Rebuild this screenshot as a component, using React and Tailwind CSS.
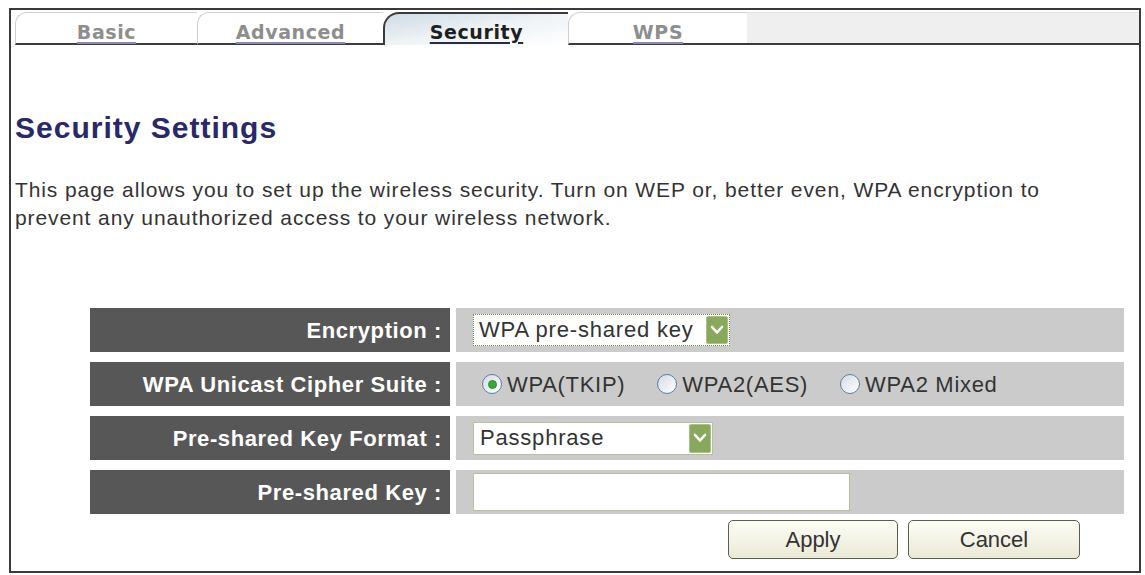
import React from 'react';

const sans = "font-['Liberation_Sans',Arial,sans-serif]";

function Chevron() {
  return (
    <svg width="14" height="12" viewBox="0 0 14 12">
      <polyline points="2,3 7,8.5 12,3" fill="none" stroke="#ffffff" strokeWidth="2.6" strokeLinecap="round" strokeLinejoin="round" />
    </svg>
  );
}

function Radio({ checked, label }) {
  return (
    <div className="flex items-center gap-[5px]">
      <div className="w-[20px] h-[20px] rounded-full border border-[#5d7ea8] bg-linear-to-br from-[#d6dbe2] to-white flex items-center justify-center">
        {checked && <div className="w-[9px] h-[9px] rounded-full bg-[#36a83a] border border-[#2e8f32]" />}
      </div>
      <span className="text-[22px] tracking-[0.7px] text-[#333]">{label}</span>
    </div>
  );
}

function Row({ label, children }) {
  return (
    <div className="flex h-[44px] gap-[6px]">
      <div className="w-[360px] bg-[#575757] flex items-center justify-end pr-[8px]">
        <span className="text-[22px] font-bold tracking-[0.6px] text-white">{label}</span>
      </div>
      <div className="w-[668px] bg-[#cbcbcb] flex items-center">{children}</div>
    </div>
  );
}

function Tab({ label, active, width }) {
  if (active) {
    return (
      <div className={`${width} h-[33px] pb-[2px] flex items-end justify-center border-t-2 border-l-2 border-[#3a3a3a] rounded-tl-[16px] bg-linear-to-br from-[#cfdbe5] via-[#eef3f6] to-white`}>
        <span className="font-['DejaVu_Sans',sans-serif] font-bold text-[19px] leading-[22px] tracking-[0.6px] text-[#1f1f1f] underline decoration-[2px] underline-offset-[3px] decoration-[#2a2a44]">
          {label}
        </span>
      </div>
    );
  }
  return (
    <div className={`${width} h-[33px] flex items-end justify-center border-t border-l border-[#cfcfcf] border-b-2 border-b-[#3c3c3c] rounded-tl-[12px] bg-white`}>
      <span className="font-['DejaVu_Sans',sans-serif] font-bold text-[19px] leading-[22px] tracking-[0.6px] text-[#8e8e8e] underline decoration-[2px] underline-offset-[3px] decoration-[#8d89b6]">
        {label}
      </span>
    </div>
  );
}

export default function App() {
  return (
    <div className={`w-[1145px] h-[575px] bg-white pt-[8px] pl-[9px] ${sans}`}>
      <div className="w-[1132px] h-[565px] border-2 border-[#3a3a3a] flex flex-col">
        <div className="flex pt-[2px] pl-[4px]">
          <Tab label="Basic" width="w-[182px]" />
          <Tab label="Advanced" width="w-[186px]" />
          <Tab label="Security" width="w-[185px]" active />
          <Tab label="WPS" width="w-[179px]" />
          <div className="flex-1 h-[33px] bg-[#efefef] border-t border-[#e2e2e2] border-b-2 border-b-[#3c3c3c]" />
        </div>

        <div className="pl-[4px]">
          <h1 className="mt-[65px] text-[30px] leading-[36px] font-bold tracking-[1px] text-[#28286a]">
            Security Settings
          </h1>
          <p className="mt-[30px] text-[21px] leading-[28px] tracking-[0.9px] text-[#333]">
            This page allows you to set up the wireless security. Turn on WEP or, better even, WPA encryption to
            <br />
            prevent any unauthorized access to your wireless network.
          </p>
        </div>

        <div className="mt-[76px] ml-[79px] w-[1034px] flex flex-col gap-[10px]">
          <Row label="Encryption :">
            <div className="ml-[17px] w-[257px] h-[32px] border border-dotted border-[#6f8a4a] bg-white flex items-center justify-between pl-[5px] pr-[1px]">
              <span className="text-[22px] tracking-[0.8px] text-[#333] leading-none">WPA pre-shared key</span>
              <div className="w-[22px] h-[28px] bg-[#88a85c] border border-[#a9c283] rounded-[2px] flex items-center justify-center">
                <Chevron />
              </div>
            </div>
          </Row>
          <Row label="WPA Unicast Cipher Suite :">
            <div className="ml-[26px] flex items-center gap-[32px]">
              <Radio checked label="WPA(TKIP)" />
              <Radio label="WPA2(AES)" />
              <Radio label="WPA2 Mixed" />
            </div>
          </Row>
          <Row label="Pre-shared Key Format :">
            <div className="ml-[17px] w-[240px] h-[33px] border border-[#b5c29a] bg-white flex items-center justify-between pl-[6px] pr-[1px]">
              <span className="text-[22px] tracking-[0.8px] text-[#333] leading-none">Passphrase</span>
              <div className="w-[22px] h-[29px] bg-[#88a85c] border border-[#a9c283] rounded-[2px] flex items-center justify-center">
                <Chevron />
              </div>
            </div>
          </Row>
          <Row label="Pre-shared Key :">
            <input
              type="text"
              className="ml-[17px] w-[377px] h-[38px] border border-[#b5c29a] bg-white outline-none"
            />
          </Row>
        </div>

        <div className="ml-[79px] w-[1034px] mt-[6px] pr-[44px] flex justify-end gap-[10px]">
          <button className="w-[170px] h-[39px] rounded-[5px] border border-[#56604a] bg-linear-to-b from-[#fdfdf6] to-[#ebe9d6] text-[22px] text-[#333]">
            Apply
          </button>
          <button className="w-[172px] h-[39px] rounded-[5px] border border-[#56604a] bg-linear-to-b from-[#fdfdf6] to-[#ebe9d6] text-[22px] text-[#333]">
            Cancel
          </button>
        </div>
      </div>
    </div>
  );
}
